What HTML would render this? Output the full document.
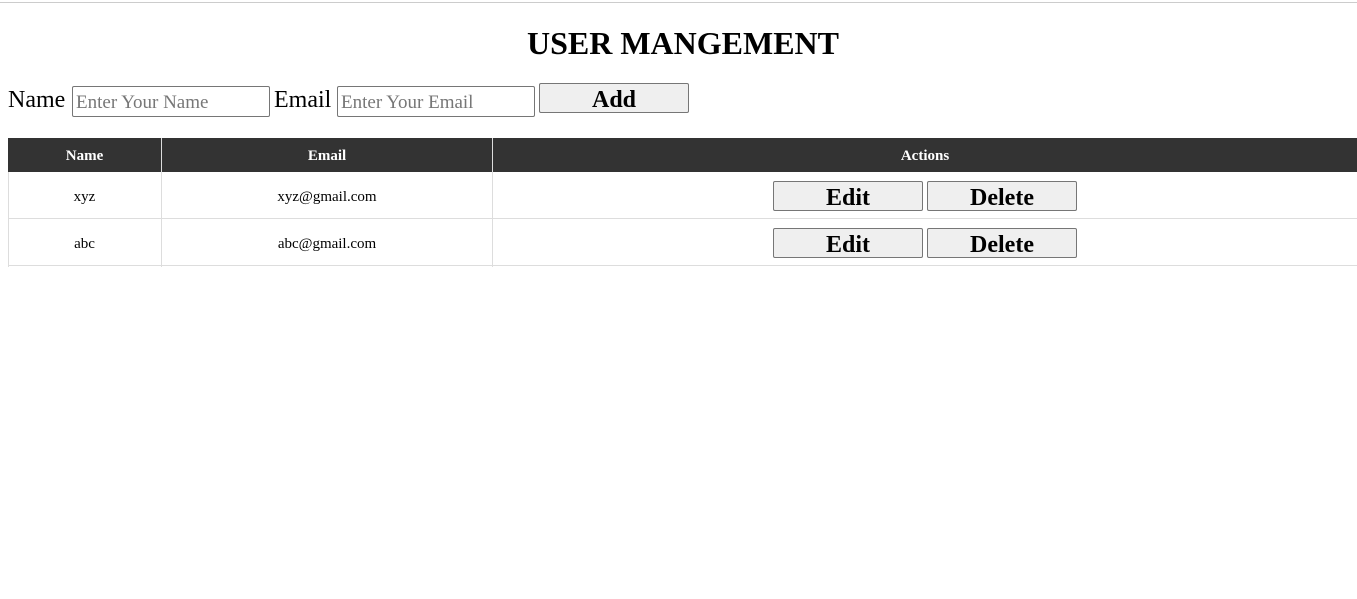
<!DOCTYPE html>
<html><head><style>
body{margin:0;width:1357px;height:599px;overflow:hidden;background:#fff;font-family:"Liberation Serif",serif;position:relative}
.a{position:absolute}
.hr{left:0;top:2px;width:1357px;height:1px;background:#ccc}
h1{position:absolute;left:0;width:1366px;top:25px;margin:0;text-align:center;font-size:32px;font-weight:bold;line-height:36px}
.lbl{font-size:24px;line-height:28px}
.inp{box-sizing:border-box;height:31px;border:1px solid #767676;border-radius:2px;font-size:19px;color:#777;padding:5px 3px 3px;line-height:21px;white-space:nowrap;overflow:hidden}
.btn{box-sizing:border-box;width:150px;height:30px;background:#efefef;border:1px solid #767676;border-radius:2px;font-size:24px;font-weight:bold;text-align:center;line-height:30px;padding-top:1px}
.th{box-sizing:border-box;background:#333;color:#fff;font-size:15px;font-weight:bold;text-align:center;line-height:34px;height:34px;padding-top:1px}
.td{box-sizing:border-box;font-size:15px;text-align:center;line-height:46px;height:47px;padding-top:2px;border-bottom:1px solid #ddd}
.vl{width:1px;background:#ddd}
</style></head><body>
<div class="a hr"></div>
<h1>USER MANGEMENT</h1>
<div class="a lbl" style="left:8px;top:86px">Name</div>
<div class="a inp" style="left:72px;top:86px;width:198px">Enter Your Name</div>
<div class="a lbl" style="left:274px;top:86px">Email</div>
<div class="a inp" style="left:337px;top:86px;width:198px">Enter Your Email</div>
<div class="a btn" style="left:539px;top:83px">Add</div>

<div class="a th" style="left:8px;top:138px;width:153px">Name</div>
<div class="a th" style="left:162px;top:138px;width:330px">Email</div>
<div class="a th" style="left:493px;top:138px;width:864px">Actions</div>
<div class="a" style="left:161px;top:138px;width:1px;height:34px;background:#ddd"></div>
<div class="a" style="left:492px;top:138px;width:1px;height:34px;background:#ddd"></div>

<div class="a td" style="left:8px;top:172px;width:153px">xyz</div>
<div class="a td" style="left:162px;top:172px;width:330px">xyz@gmail.com</div>
<div class="a td" style="left:493px;top:172px;width:864px"></div>
<div class="a td" style="left:8px;top:219px;width:153px">abc</div>
<div class="a td" style="left:162px;top:219px;width:330px">abc@gmail.com</div>
<div class="a td" style="left:493px;top:219px;width:864px"></div>
<div class="a vl" style="left:8px;top:172px;height:95px"></div>
<div class="a vl" style="left:161px;top:172px;height:95px"></div>
<div class="a vl" style="left:492px;top:172px;height:95px"></div>

<div class="a btn" style="left:773px;top:181px">Edit</div>
<div class="a btn" style="left:927px;top:181px">Delete</div>
<div class="a btn" style="left:773px;top:228px">Edit</div>
<div class="a btn" style="left:927px;top:228px">Delete</div>
</body></html>
